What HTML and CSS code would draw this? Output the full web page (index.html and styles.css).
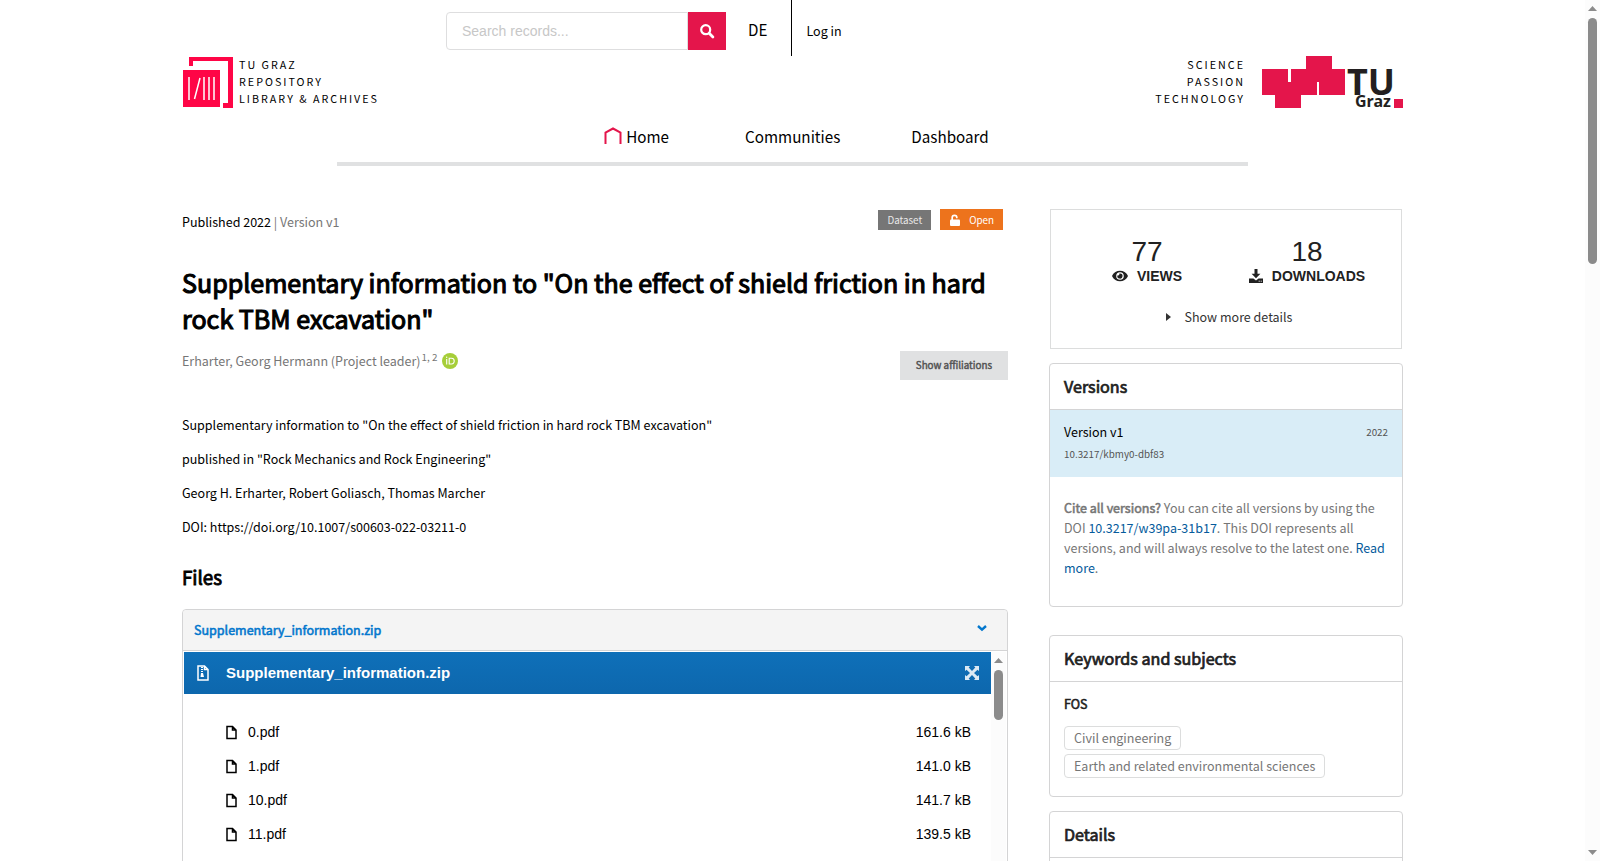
FILE: index.html
```html
<!DOCTYPE html>
<html lang="en">

<head>
  <meta charset="utf-8">
  <title>Supplementary information to "On the effect of shield friction in hard rock TBM excavation"</title>
  <link rel="stylesheet" href="styles.css">
</head>

<body>
  <header class="container">
    <div class="topbar">
      <form class="search" role="search">
        <input type="text" placeholder="Search records..." aria-label="Search records">
        <button type="submit" aria-label="Search">
          <svg width="14" height="14" viewBox="0 0 14 14"><circle cx="5.7" cy="5.7" r="4.5" fill="none" stroke="currentColor" stroke-width="2.2"/><path d="M9.2 9.2l3.7 3.7" stroke="currentColor" stroke-width="2.8" stroke-linecap="round"/></svg>
        </button>
      </form>
      <a class="lang" href="#">DE</a>
      <a class="login" href="#">Log in</a>
    </div>
    <div class="brand">
      <a class="brand-side" href="#">
        <svg width="51" height="52" viewBox="0 0 51 52">
          <path fill="#ff0546" d="M7 1h44v51h-10v-5h5V5H11v5H7zM1 14h37v37H1z"/>
          <path stroke="#fff" stroke-width="1.5" d="M7 21v23M18 22l-5.500 21M22 21v23M27 21v23M32 21v23"/>
        </svg>
        <span>TU GRAZ<br>REPOSITORY<br>LIBRARY &amp; ARCHIVES</span>
      </a>
      <a class="brand-side right" href="#">
        <span>SCIENCE<br>PASSION<br>TECHNOLOGY</span>
        <svg width="141" height="52" viewBox="0 0 141 52">
          <path fill="#e4154b" d="M0 13h26v13h3V13h15V0h26v13h13v26H57V26h-2v13H39v13H13V39H0zM132 43h9v9h-9z"/>
          <text class="logo-tu" x="85" y="39">TU</text>
          <text class="logo-graz" x="93" y="51">Graz</text>
        </svg>
      </a>
    </div>
    <nav class="menu">
      <a class="home" href="#">
        <svg width="18" height="21" viewBox="0 0 18 21"><path d="M1.500 20V8.500L9 4.500l7.500 4V20" fill="none" stroke="#e4154b" stroke-width="2"/></svg>
        Home
      </a>
      <a href="#">Communities</a>
      <a href="#">Dashboard</a>
    </nav>
  </header>

  <div class="container columns">
    <main>
      <div class="meta">
        <div>Published 2022 <span class="muted">| Version v1</span></div>
        <div class="labels">
          <span class="label grey">Dataset</span>
          <span class="label orange">
            <svg width="12" height="12" viewBox="0 0 12 12"><path d="M3.200 6V3.600a2.300 2.300 0 0 1 4.600 0v.7" fill="none" stroke="currentColor" stroke-width="1.700"/><rect x="1" y="5.500" width="10" height="6.500" rx="1" fill="currentColor"/></svg>
            Open
          </span>
        </div>
      </div>
      <h1>Supplementary information to "On the effect of shield friction in hard rock TBM excavation"</h1>
      <div class="creators">
        <div class="muted">
          <span>Erharter, Georg Hermann (Project leader)</span><sup>1, 2</sup>
          <a href="#" aria-label="ORCID profile"><svg width="16" height="16" viewBox="0 0 16 16"><circle cx="8" cy="8" r="8" fill="#a6ce39"/><path d="M4.700 6v5.500M7.200 5.200h2.300c3.600 0 3.600 5.800 0 5.800H7.200z" fill="none" stroke="#fff" stroke-width="1.100"/><circle cx="4.700" cy="4.200" r=".7" fill="#fff"/></svg></a>
        </div>
        <button class="affiliations" type="button">Show affiliations</button>
      </div>
      <div class="description">
        <p>Supplementary information to "On the effect of shield friction in hard rock TBM excavation"</p>
        <p>published in "Rock Mechanics and Rock Engineering"</p>
        <p>Georg H. Erharter, Robert Goliasch, Thomas Marcher</p>
        <p>DOI: https://doi.org/10.1007/s00603-022-03211-0</p>
      </div>

      <h2>Files</h2>
      <section class="files">
        <div class="files-title">
          <a href="#">Supplementary_information.zip</a>
          <svg width="10" height="10" viewBox="0 0 10 10"><path d="M1 1l4 3.600L9 1" fill="none" stroke="currentColor" stroke-width="2.400"/></svg>
        </div>
        <div class="preview">
          <div class="preview-content">
            <div class="preview-head">
              <svg width="12" height="16" viewBox="0 0 12 16"><path d="M1 1h6.500L11 4.500V15H1zM7.500 1v3.500H11" fill="none" stroke="currentColor" stroke-width="1.500"/><path d="M5 2v6" stroke="currentColor" stroke-width="2" stroke-dasharray="1 1"/><path d="M4 8h2l1 4H3.500z" fill="currentColor"/></svg>
              <strong>Supplementary_information.zip</strong>
              <button type="button" aria-label="Toggle full screen">
                <svg width="14" height="14" viewBox="0 0 14 14"><path d="M0 0h5L3.700 1.500 7 5l3.300-3.500L9 0h5v5l-1.500-1.300L9 7l3.500 3.300L14 9v5H9l1.300-1.500L7 9l-3.300 3.500L5 14H0V9l1.500 1.300L5 7 1.500 3.700 0 5z" fill="currentColor"/></svg>
              </button>
            </div>
            <ul class="file-list">
              <li><svg class="file-icon" viewBox="0 0 11 15"><path d="M1 1.500h5.500L10 5v8.500H1zM6.500 1.500V5H10"/></svg>0.pdf <span>161.6 kB</span></li>
              <li><svg class="file-icon" viewBox="0 0 11 15"><path d="M1 1.500h5.500L10 5v8.500H1zM6.500 1.500V5H10"/></svg>1.pdf <span>141.0 kB</span></li>
              <li><svg class="file-icon" viewBox="0 0 11 15"><path d="M1 1.500h5.500L10 5v8.500H1zM6.500 1.500V5H10"/></svg>10.pdf <span>141.7 kB</span></li>
              <li><svg class="file-icon" viewBox="0 0 11 15"><path d="M1 1.500h5.500L10 5v8.500H1zM6.500 1.500V5H10"/></svg>11.pdf <span>139.5 kB</span></li>
              <li><svg class="file-icon" viewBox="0 0 11 15"><path d="M1 1.500h5.500L10 5v8.500H1zM6.500 1.500V5H10"/></svg></li>
            </ul>
          </div>
          <div class="scrollbar" aria-hidden="true">
            <svg width="9" height="5" viewBox="0 0 9 5"><path d="M0 5l4.500-5L9 5z" fill="currentColor"/></svg>
            <div class="thumb short"></div>
          </div>
        </div>
      </section>
    </main>

    <aside>
      <section class="stats">
        <div class="stats-row">
          <div>
            <div class="stat-value">77</div>
            <div class="stat-label">
              <svg width="16" height="12" viewBox="0 0 16 12"><path fill="currentColor" fill-rule="evenodd" d="M8 .8C4.600.8 1.700 2.700.2 5.600v.8c1.500 2.900 4.400 4.800 7.800 4.800s6.300-1.900 7.800-4.800v-.8C14.300 2.700 11.400.8 8 .8zM8 2.200a3.800 3.800 0 1 1 0 7.600 3.800 3.800 0 0 1 0-7.600z"/><path d="M8 3.400A2.600 2.600 0 1 1 5.500 5.200 1.300 1.300 0 0 0 7.300 3.500z" fill="currentColor"/></svg>
              VIEWS
            </div>
          </div>
          <div>
            <div class="stat-value">18</div>
            <div class="stat-label">
              <svg width="14" height="14" viewBox="0 0 14 14"><path fill="currentColor" d="M5.500 0h3v4.800h2.900L7 9.300 2.600 4.800h2.900zM0 9.600h4.400L7 11.600l2.600-2H14V14H0z"/><path d="M9.700 12.200h1M11.700 12.200h1" stroke="#fff"/></svg>
              DOWNLOADS
            </div>
          </div>
        </div>
        <details>
          <summary><svg width="5" height="8" viewBox="0 0 5 8"><path d="M0 0l5 4-5 4z" fill="currentColor"/></svg>Show more details</summary>
        </details>
      </section>

      <section class="card">
        <h3>Versions</h3>
        <div class="version">
          <div class="version-row"><a href="#">Version v1</a><small>2022</small></div>
          <small class="doi">10.3217/kbmy0-dbf83</small>
        </div>
        <p class="cite"><strong>Cite all versions?</strong> You can cite all versions by using the DOI <a href="#">10.3217/w39pa-31b17</a>. This DOI represents all versions, and will always resolve to the latest one. <a href="#">Read more</a>.</p>
      </section>

      <section class="card keywords">
        <h3>Keywords and subjects</h3>
        <div class="card-body">
          <h4>FOS</h4>
          <a class="tag" href="#">Civil engineering</a>
          <a class="tag" href="#">Earth and related environmental sciences</a>
        </div>
      </section>

      <section class="card">
        <h3>Details</h3>
        <div class="card-body"></div>
      </section>
    </aside>
  </div>

  <div class="scrollbar page-scrollbar" aria-hidden="true">
    <svg width="9" height="5" viewBox="0 0 9 5"><path d="M0 5l4.500-5L9 5z" fill="currentColor"/></svg>
    <div class="thumb"></div>
    <svg class="down" width="9" height="5" viewBox="0 0 9 5"><path d="M0 0l4.500 5L9 0z" fill="currentColor"/></svg>
  </div>
</body>

</html>
```
FILE: styles.css
```css
* {
  box-sizing: border-box;
}

body {
  margin: 0;
  padding-right: 15px;
  background: #fff;
  color: #000;
  font: 14px/20px "Source Sans Pro", "Noto Sans CJK SC", sans-serif;
  font-size-adjust: 0.486;
}

a {
  color: inherit;
  text-decoration: none;
}

button {
  border: 0;
  padding: 0;
  cursor: pointer;
  font-family: inherit;
  font-size-adjust: inherit;
}

svg {
  display: block;
  flex: none;
  overflow: visible;
}

h1,
h2,
h3,
h4 {
  margin: 0;
}

/* the regular cut, thickened */
h1,
h2,
h3,
h4,
.affiliations,
.files-title a,
.cite strong {
  font-weight: normal;
  -webkit-text-stroke: 0.04em currentColor;
}

.muted {
  color: #767676;
}

.container {
  max-width: 1221px;
  margin: 0 auto;
}

/* header */

.topbar {
  display: flex;
  align-items: center;
  height: 56px;
  padding-left: 264px;
}

.search {
  display: flex;
  height: 38px;
  margin-top: 6px;
}

.search input {
  width: 242px;
  padding: 0 15px;
  border: 1px solid #dededf;
  border-radius: 4px 0 0 4px;
  font: 14px "Liberation Sans", sans-serif;
  font-size-adjust: none;
}

.search input::placeholder {
  color: #c7c7c7;
}

.search button {
  display: flex;
  align-items: center;
  justify-content: center;
  width: 38px;
  background: #e4154b;
  color: #fff;
}

.lang {
  padding: 2px 24px 0 22px;
  font-size: 17px;
}

.login {
  height: 56px;
  padding: 21px 14px 0;
  border-left: 1px solid #000;
}

.brand {
  display: flex;
  justify-content: space-between;
}

.brand-side {
  display: flex;
  gap: 6px;
  font-size: 12px;
  line-height: 17px;
  letter-spacing: 2px;
}

.brand-side.right {
  gap: 17px;
  text-align: right;
}

.logo-tu,
.logo-graz {
  fill: #231f20;
  font-family: "Noto Sans", sans-serif;
  font-size-adjust: none;
  font-weight: bold;
  letter-spacing: 0;
}

.logo-tu {
  font-size: 36px;
}

.logo-graz {
  font-size: 16px;
}

.menu {
  display: flex;
  justify-content: center;
  gap: 71px;
  height: 58px;
  margin: 0 155px;
  padding: 16px 0 0 8px;
  border-bottom: 4px solid #e0e1e2;
  font-size: 17px;
  line-height: 24px;
}

.menu a {
  display: flex;
  gap: 4px;
}

.menu .home {
  margin-right: 5px;
}

/* record */

.columns {
  display: grid;
  grid-template-columns: minmax(0, 1fr) 354px;
  gap: 41px;
  margin-top: 43px;
}

.meta,
.creators {
  display: flex;
  justify-content: space-between;
}

.meta {
  line-height: 26px;
}

.labels {
  display: flex;
  align-items: flex-end;
  gap: 9px;
  height: 21px;
  padding-right: 5px;
}

.label {
  display: flex;
  align-items: center;
  gap: 8px;
  height: 20px;
  padding: 0 9px;
  color: #fff;
  font-size: 11px;
}

.grey {
  background: #767676;
  color: #e8e8e8;
}

.orange {
  height: 21px;
  background: #ed731c;
}

h1 {
  margin-top: 29px;
  font-size: 28px;
  line-height: 36px;
}

.creators {
  margin-top: 15px;
}

.creators .muted {
  display: flex;
  align-items: center;
  height: 20px;
}

.creators sup {
  margin: 0 5px 8px 1px;
  font-size: 11px;
  line-height: 12px;
}

.affiliations {
  height: 29px;
  padding: 0 16px 2px;
  background: #e0e1e2;
  color: #545454;
  font-size: 11px;
}

.description {
  margin-top: 35px;
}

.description p {
  margin: 0 0 14px;
}

h2 {
  margin-top: 25px;
  font-size: 21px;
  line-height: 30px;
}

.files {
  margin-top: 17px;
  border: 1px solid #d4d4d5;
  border-radius: 4px 4px 0 0;
}

.files-title {
  display: flex;
  align-items: center;
  justify-content: space-between;
  height: 41px;
  padding: 0 20px 0 11px;
  border-bottom: 1px solid #d4d4d5;
  border-radius: 4px 4px 0 0;
  background: #f4f4f4;
  color: #0377cd;
}

.preview {
  display: flex;
  height: 400px;
  margin: 1px;
  overflow: hidden;
  font: 14px/20px "Liberation Sans", sans-serif;
  font-size-adjust: none;
}

.preview-content {
  flex: 1;
}

.preview-head {
  display: flex;
  align-items: center;
  gap: 17px;
  height: 42px;
  padding: 0 12px 0 13px;
  background: linear-gradient(#0f70b9, #0d67ad);
  color: #fff;
  font-size: 15px;
}

.preview-head button {
  margin-left: auto;
  background: none;
  color: #dbe9f4;
}

.file-list {
  margin: 0;
  padding: 21px 20px 0 42px;
  list-style: none;
}

.file-list li {
  display: flex;
  align-items: center;
  gap: 11px;
  height: 34px;
}

.file-list span {
  margin-left: auto;
}

.file-icon {
  width: 11px;
  height: 15px;
  fill: none;
  stroke: #000;
  stroke-width: 1.5;
}

/* scrollbars */

.scrollbar {
  display: flex;
  flex-direction: column;
  align-items: center;
  gap: 7px;
  width: 15px;
  padding: 6px 0;
  background: #fcfcfc;
  color: #8b8b8b;
}

.page-scrollbar {
  position: fixed;
  top: 0;
  right: 0;
  bottom: 0;
}

.thumb {
  width: 9px;
  height: 29%;
  border-radius: 5px;
  background: #8b8b8b;
}

.thumb.short {
  height: 50px;
}

.down {
  margin-top: auto;
}

/* sidebar */

.stats {
  margin: 0 1px 14px;
  padding: 28px 0 21px;
  border: 1px solid #dcdddd;
  color: #212121;
}

.stats-row {
  display: grid;
  grid-template-columns: 1fr 1fr;
  padding: 0 14px 0 16px;
  font-family: "Liberation Sans", sans-serif;
  font-size-adjust: none;
  text-align: center;
}

.stat-value {
  font-size: 28px;
  line-height: 28px;
}

.stat-label {
  display: flex;
  align-items: center;
  justify-content: center;
  gap: 9px;
  font-weight: bold;
}

summary {
  display: flex;
  align-items: center;
  justify-content: center;
  gap: 14px;
  margin-top: 21px;
  padding-left: 6px;
  color: #333;
  list-style: none;
}

.card {
  margin-bottom: 28px;
  border: 1px solid #d4d4d5;
  border-radius: 4px;
}

.card.keywords {
  margin-bottom: 14px;
}

h3 {
  padding: 10px 14px;
  border-bottom: 1px solid #d4d4d5;
  color: #212121;
  font-size: 18px;
  line-height: 25px;
}

.version {
  padding: 12px 14px 11px;
  background: #d9edf7;
}

.version-row {
  display: flex;
  justify-content: space-between;
}

.version small {
  color: #545454;
  font-size: 11px;
}

.version .doi {
  display: block;
  line-height: 24px;
}

.cite {
  margin: 0;
  padding: 21px 14px 28px;
  color: #767676;
}

.cite a {
  color: #065b9c;
}

.card-body {
  padding: 12px 14px 18px;
}

h4 {
  margin-bottom: 12px;
  color: #212121;
}

.tag {
  display: block;
  width: fit-content;
  margin-top: 4px;
  padding: 1px 9px;
  border: 1px solid #dcdddd;
  border-radius: 4px;
  color: #767676;
}
```
